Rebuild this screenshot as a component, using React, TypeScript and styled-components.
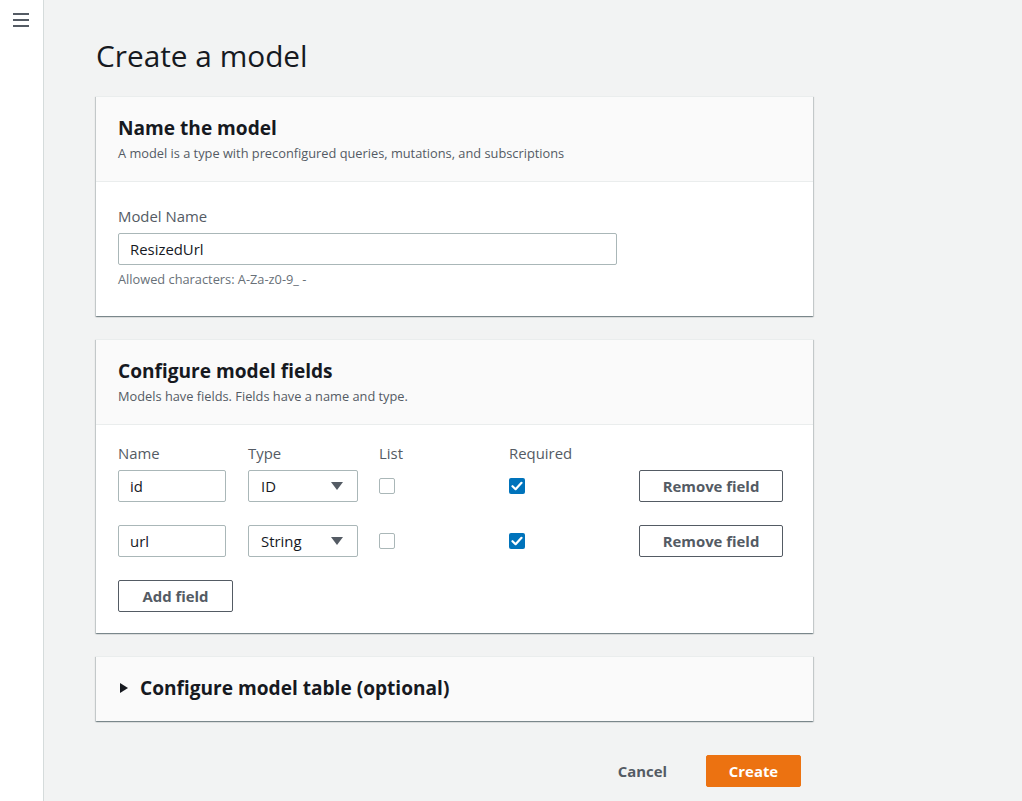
import React from "react";
import styled, { createGlobalStyle } from "styled-components";

const GlobalStyle = createGlobalStyle`
  html, body { margin: 0; padding: 0; }
  body {
    background: #f2f3f3;
    font-family: "Open Sans", "Noto Sans", Arial, sans-serif;
    color: #16191f;
  }
  * { box-sizing: border-box; }
`;

const Layout = styled.div`
  display: flex;
  min-height: 801px;
`;

const Sidebar = styled.nav`
  width: 44px;
  flex: none;
  background: #ffffff;
  border-right: 1px solid #d5dbdb;
  padding: 13px 0 0 13px;
`;

const MenuButton = styled.div`
  display: flex;
  flex-direction: column;
  gap: 4px;
  width: 16px;
`;

const MenuBar = styled.span`
  display: block;
  height: 2px;
  background: #545b64;
`;

const Main = styled.main`
  flex: 1;
  padding: 37px 0 0 52px;
`;

const Content = styled.div`
  width: 717px;
  display: flex;
  flex-direction: column;
`;

const PageTitle = styled.h1`
  margin: 0 0 21px;
  font-size: 29.8px;
  line-height: 38px;
  font-weight: 400;
  color: #16191f;
`;

const Card = styled.section<{ $gap?: number }>`
  background: #ffffff;
  margin-bottom: ${(p) => p.$gap ?? 23}px;
  box-shadow: 0 1px 1px 0 rgba(0, 28, 36, 0.3),
    1px 1px 1px 0 rgba(0, 28, 36, 0.15),
    -1px 1px 1px 0 rgba(0, 28, 36, 0.15);
  border-top: 1px solid #eaeded;
`;

const CardHeader = styled.header`
  background: #fafafa;
  padding: 19px 22px 19px;
  border-bottom: 1px solid #eaeded;
`;

const CardTitle = styled.h2`
  margin: 0;
  font-size: 19.1px;
  line-height: 24px;
  font-weight: 700;
  color: #16191f;
`;

const CardSubtitle = styled.p`
  margin: 4px 0 0;
  font-size: 12.8px;
  line-height: 18px;
  color: #545b64;
`;

const CardBody = styled.div<{ $pt: number; $pb: number }>`
  padding: ${(p) => p.$pt}px 22px ${(p) => p.$pb}px;
`;

const Label = styled.div`
  font-size: 14.9px;
  line-height: 20px;
  color: #545b64;
`;

const TextInput = styled.div<{ $width: number; $mt?: number }>`
  width: ${(p) => p.$width}px;
  height: 32px;
  margin-top: ${(p) => p.$mt ?? 0}px;
  border: 1px solid #aab7b8;
  border-radius: 2px;
  background: #ffffff;
  padding: 0 11px;
  display: flex;
  align-items: center;
  font-size: 14.9px;
  color: #16191f;
`;

const Hint = styled.div`
  margin-top: 6px;
  font-size: 12.8px;
  line-height: 16px;
  color: #687078;
`;

const FieldGrid = styled.div`
  display: grid;
  grid-template-columns: 130px 131px 130px 130px auto;
  row-gap: 23px;
  align-items: center;
`;

const HeaderCell = styled(Label)`
  margin-bottom: -16px;
`;

const Select = styled.div`
  width: 110px;
  height: 32px;
  border: 1px solid #aab7b8;
  border-radius: 2px;
  padding: 0 14px 0 12px;
  display: flex;
  align-items: center;
  justify-content: space-between;
  font-size: 14.9px;
  color: #16191f;
`;

const Caret = styled.span`
  width: 0;
  height: 0;
  border-left: 6px solid transparent;
  border-right: 6px solid transparent;
  border-top: 8px solid #545b64;
`;

const Check = styled.span<{ $on?: boolean }>`
  width: 16px;
  height: 16px;
  border-radius: 2px;
  border: ${(p) => (p.$on ? "none" : "1px solid #aab7b8")};
  background: ${(p) => (p.$on ? "#0073bb" : "#ffffff")};
  display: flex;
  align-items: center;
  justify-content: center;
`;

const Button = styled.button<{ $width: number; $primary?: boolean }>`
  width: ${(p) => p.$width}px;
  height: 32px;
  border-radius: 2px;
  border: 1px solid ${(p) => (p.$primary ? "#ec7211" : "#545b64")};
  background: ${(p) => (p.$primary ? "#ec7211" : "#ffffff")};
  color: ${(p) => (p.$primary ? "#ffffff" : "#545b64")};
  font-family: inherit;
  font-size: 14.9px;
  font-weight: 700;
  padding: 0;
  cursor: pointer;
`;

const LinkButton = styled.button`
  height: 32px;
  background: transparent;
  border: none;
  padding: 0 20px;
  color: #545b64;
  font-family: inherit;
  font-size: 14.9px;
  font-weight: 700;
  cursor: pointer;
`;

const AddRow = styled.div`
  margin-top: 23px;
`;

const Expander = styled.div`
  display: flex;
  align-items: center;
  gap: 12px;
  background: #fafafa;
  padding: 19px 22px 21px 24px;
`;

const Arrow = styled.span`
  width: 0;
  height: 0;
  border-top: 5px solid transparent;
  border-bottom: 5px solid transparent;
  border-left: 8px solid #16191f;
`;

const Footer = styled.div`
  display: flex;
  justify-content: flex-end;
  align-items: center;
  gap: 19px;
  margin-top: 34px;
  padding-right: 12px;
`;

const CheckMark = () => (
  <svg width="12" height="10" viewBox="0 0 12 10">
    <path d="M1.5 5.2 L4.6 8.2 L10.5 1.8" fill="none" stroke="#ffffff" strokeWidth="2.2" strokeLinecap="round" strokeLinejoin="round" />
  </svg>
);

const fields = [
  { name: "id", type: "ID" },
  { name: "url", type: "String" },
];

export default function App() {
  return (
    <>
      <GlobalStyle />
      <Layout>
        <Sidebar>
          <MenuButton>
            <MenuBar />
            <MenuBar />
            <MenuBar />
          </MenuButton>
        </Sidebar>
        <Main>
          <Content>
            <PageTitle>Create a model</PageTitle>

            <Card>
              <CardHeader>
                <CardTitle>Name the model</CardTitle>
                <CardSubtitle>A model is a type with preconfigured queries, mutations, and subscriptions</CardSubtitle>
              </CardHeader>
              <CardBody $pt={24} $pb={29}>
                <Label>Model Name</Label>
                <TextInput $width={499} $mt={7}>ResizedUrl</TextInput>
                <Hint>Allowed characters: A-Za-z0-9_ -</Hint>
              </CardBody>
            </Card>

            <Card $gap={23}>
              <CardHeader>
                <CardTitle>Configure model fields</CardTitle>
                <CardSubtitle>Models have fields. Fields have a name and type.</CardSubtitle>
              </CardHeader>
              <CardBody $pt={18} $pb={21}>
                <FieldGrid>
                  <HeaderCell>Name</HeaderCell>
                  <HeaderCell>Type</HeaderCell>
                  <HeaderCell>List</HeaderCell>
                  <HeaderCell>Required</HeaderCell>
                  <HeaderCell />
                  {fields.map((f) => (
                    <React.Fragment key={f.name}>
                      <TextInput $width={108}>{f.name}</TextInput>
                      <Select>
                        {f.type}
                        <Caret />
                      </Select>
                      <Check />
                      <Check $on>
                        <CheckMark />
                      </Check>
                      <Button $width={144}>Remove field</Button>
                    </React.Fragment>
                  ))}
                </FieldGrid>
                <AddRow>
                  <Button $width={115}>Add field</Button>
                </AddRow>
              </CardBody>
            </Card>

            <Card $gap={0}>
              <Expander>
                <Arrow />
                <CardTitle>Configure model table (optional)</CardTitle>
              </Expander>
            </Card>

            <Footer>
              <LinkButton>Cancel</LinkButton>
              <Button $width={95} $primary>Create</Button>
            </Footer>
          </Content>
        </Main>
      </Layout>
    </>
  );
}
